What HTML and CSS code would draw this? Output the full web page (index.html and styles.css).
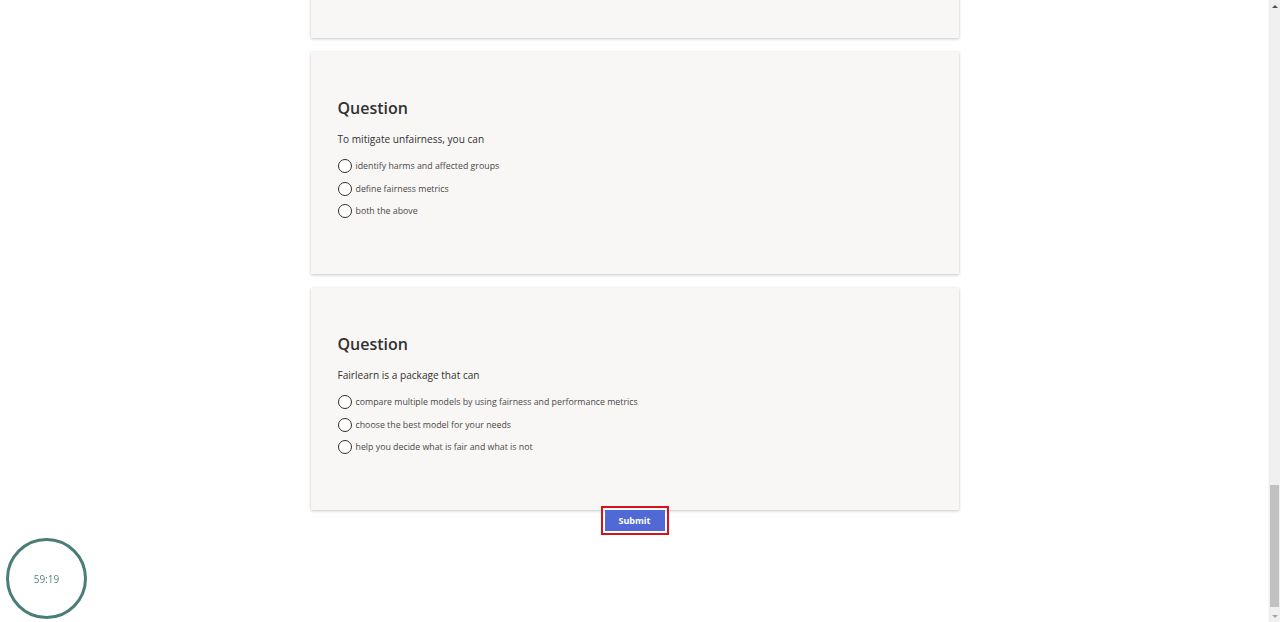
FILE: index.html
```html
<!DOCTYPE html>
<html lang="en">
<head>
<meta charset="utf-8">
<title>Quiz</title>
<link rel="stylesheet" href="styles.css">
</head>
<body>
<div class="viewport">
  <main class="page">
    <section class="card card-partial"></section>
    <section class="card">
      <h2 class="q-title">Question</h2>
      <p class="q-text">To mitigate unfairness, you can</p>
      <ul class="options">
        <li class="option"><span class="radio"></span><span>identify harms and affected groups</span></li>
        <li class="option"><span class="radio"></span><span>define fairness metrics</span></li>
        <li class="option"><span class="radio"></span><span>both the above</span></li>
      </ul>
    </section>
    <section class="card">
      <h2 class="q-title">Question</h2>
      <p class="q-text">Fairlearn is a package that can</p>
      <ul class="options">
        <li class="option"><span class="radio"></span><span>compare multiple models by using fairness and performance metrics</span></li>
        <li class="option"><span class="radio"></span><span>choose the best model for your needs</span></li>
        <li class="option"><span class="radio"></span><span>help you decide what is fair and what is not</span></li>
      </ul>
    </section>
    <div class="actions">
      <button class="submit" type="button">Submit</button>
    </div>
  </main>
  <div class="scrollbar">
    <span class="arrow arrow-up"></span>
    <div class="track"><div class="thumb"></div></div>
    <span class="arrow arrow-down"></span>
  </div>
</div>
<div class="timer"><span>59:19</span></div>
</body>
</html>
```
FILE: styles.css
```css
html, body {
  margin: 0;
  padding: 0;
  height: 100%;
  overflow: hidden;
  background: #ffffff;
  font-family: "Open Sans", "Noto Sans", "Liberation Sans", sans-serif;
  color: #323130;
}

.viewport {
  display: flex;
  height: 622px;
}

.page {
  flex: 1;
  display: flex;
  flex-direction: column;
  align-items: center;
  gap: 14px;
  padding-left: 1px;
}

.card {
  box-sizing: border-box;
  width: 648px;
  height: 222px;
  flex: none;
  background: #f8f7f6;
  box-shadow: 0 1px 3px rgba(0, 0, 0, 0.22), 0 0 1px rgba(0, 0, 0, 0.06);
  padding: 44px 27px 0;
}

.card-partial {
  margin-top: -184px;
}

.q-title {
  margin: 0;
  font-size: 16px;
  line-height: 24px;
  font-weight: 600;
  color: #323130;
}

.q-text {
  margin: 11px 0 0;
  font-size: 10.1px;
  line-height: 16px;
  color: #323130;
}

.options {
  list-style: none;
  margin: 8px 0 0;
  padding: 0;
}

.option {
  display: flex;
  align-items: center;
  gap: 4px;
  height: 22.5px;
  font-size: 8.8px;
  color: #4a4846;
}

.radio {
  box-sizing: border-box;
  width: 14px;
  height: 14px;
  border: 1px solid #323130;
  border-radius: 50%;
  background: #fff;
  flex: none;
}

.actions {
  margin-top: -14px;
  display: flex;
  justify-content: center;
}

.submit {
  width: 60px;
  height: 21px;
  padding: 0;
  border: none;
  border-radius: 0;
  background: #5069d4;
  color: #fff;
  font-family: inherit;
  font-size: 9px;
  font-weight: 700;
  outline: 2px solid #d4141c;
  outline-offset: 2px;
}

.scrollbar {
  width: 11px;
  flex: none;
  display: flex;
  flex-direction: column;
  background: #f0f0f0;
  border-left: 1px solid #f7f7f7;
}

.arrow {
  height: 12px;
  flex: none;
  display: flex;
  justify-content: center;
  align-items: center;
}

.arrow::before {
  content: "";
  width: 0;
  height: 0;
  border-left: 3px solid transparent;
  border-right: 3px solid transparent;
}

.arrow-up::before {
  border-bottom: 3px solid #505050;
}

.arrow-down::before {
  border-top: 3px solid #a3a3a3;
}

.track {
  flex: 1;
  display: flex;
  flex-direction: column;
  justify-content: flex-end;
  padding: 0 1px 3px;
}

.thumb {
  height: 122px;
  background: #c1c1c1;
}

.timer {
  position: fixed;
  left: 6px;
  top: 538px;
  box-sizing: border-box;
  width: 81px;
  height: 81px;
  border: 3px solid #4b7d78;
  border-radius: 50%;
  display: flex;
  align-items: center;
  justify-content: center;
  font-size: 10px;
  color: #5a8883;
}
```
